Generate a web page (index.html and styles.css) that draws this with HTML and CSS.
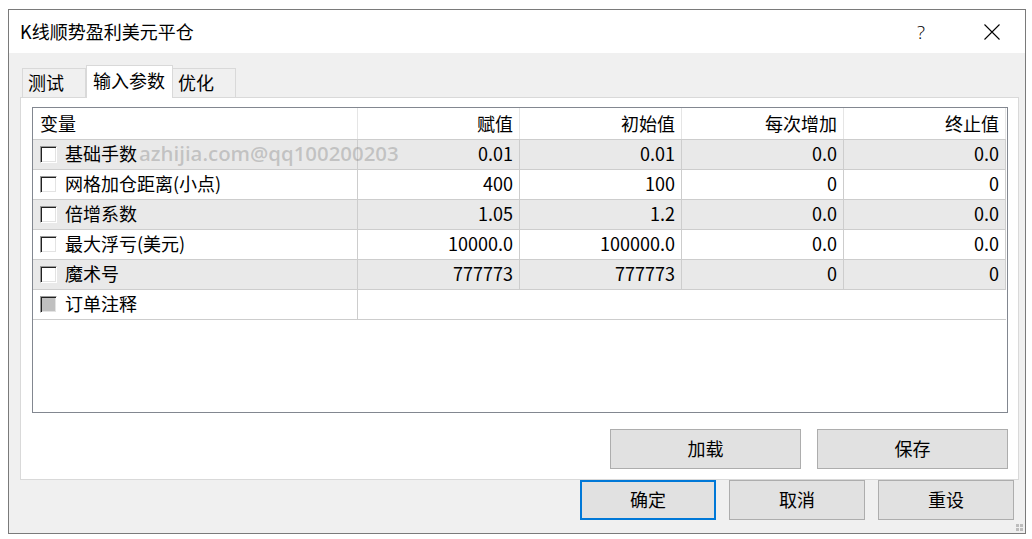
FILE: index.html
```html
<!DOCTYPE html>
<html lang="zh-CN">
<head>
    <meta charset="UTF-8">
    <title>K线顺势盈利美元平仓</title>
    <link rel="stylesheet" href="styles.css">
</head>
<body>
    <div class="window">
        <div class="titlebar">
            <span class="title">K线顺势盈利美元平仓</span>
            <span class="help">?</span>
            <svg class="close" width="16" height="16" viewBox="0 0 16 16">
                <path d="M0.5 0.5 L15.5 15.5 M15.5 0.5 L0.5 15.5" stroke="#000" stroke-width="1.1" fill="none"/>
            </svg>
        </div>

        <div class="client">
            <div class="tabs">
                <div class="tab first">测试</div>
                <div class="tab active">输入参数</div>
                <div class="tab last">优化</div>
            </div>

            <div class="panel">
                <div class="listview">
                    <div class="row head">
                        <div class="cell name">变量</div>
                        <div class="cell">赋值</div>
                        <div class="cell">初始值</div>
                        <div class="cell">每次增加</div>
                        <div class="cell">终止值</div>
                    </div>
                    <div class="row alt">
                        <div class="cell name"><span class="check"></span>基础手数</div>
                        <div class="cell">0.01</div>
                        <div class="cell">0.01</div>
                        <div class="cell">0.0</div>
                        <div class="cell">0.0</div>
                    </div>
                    <div class="row">
                        <div class="cell name"><span class="check"></span>网格加仓距离(小点)</div>
                        <div class="cell">400</div>
                        <div class="cell">100</div>
                        <div class="cell">0</div>
                        <div class="cell">0</div>
                    </div>
                    <div class="row alt">
                        <div class="cell name"><span class="check"></span>倍增系数</div>
                        <div class="cell">1.05</div>
                        <div class="cell">1.2</div>
                        <div class="cell">0.0</div>
                        <div class="cell">0.0</div>
                    </div>
                    <div class="row">
                        <div class="cell name"><span class="check"></span>最大浮亏(美元)</div>
                        <div class="cell">10000.0</div>
                        <div class="cell">100000.0</div>
                        <div class="cell">0.0</div>
                        <div class="cell">0.0</div>
                    </div>
                    <div class="row alt">
                        <div class="cell name"><span class="check"></span>魔术号</div>
                        <div class="cell">777773</div>
                        <div class="cell">777773</div>
                        <div class="cell">0</div>
                        <div class="cell">0</div>
                    </div>
                    <div class="row">
                        <div class="cell name"><span class="check dim"></span>订单注释</div>
                    </div>
                    <div class="watermark">azhijia.com@qq100200203</div>
                </div>

                <div class="panel-buttons">
                    <button class="btn wide">加载</button>
                    <button class="btn wide">保存</button>
                </div>
            </div>

            <div class="footer">
                <button class="btn default">确定</button>
                <button class="btn">取消</button>
                <button class="btn">重设</button>
            </div>
        </div>

        <div class="grip">
            <span></span><span></span><span></span><span></span>
        </div>
    </div>
</body>
</html>
```

FILE: styles.css
```css
body {
    margin: 0;
    background: #fff;
    color: #000;
    font-family: "Noto Sans CJK SC", "Microsoft YaHei", sans-serif;
    font-size: 18px;
}

.window {
    position: relative;
    display: flex;
    flex-direction: column;
    width: 1016px;
    height: 523px;
    margin: 9px 0 0 8px;
    border: 1px solid #7a7a7a;
    background: #f0f0f0;
}

/* title bar */
.titlebar {
    display: flex;
    align-items: center;
    height: 43px;
    padding: 0 25px 0 11px;
    background: #fff;
}
.title {
    flex: 1;
    line-height: 24px;
    padding-bottom: 2px;
}
.help {
    font-family: "Open Sans", sans-serif;
    font-weight: 300;
    font-size: 19px;
    line-height: 24px;
}
.close {
    margin-left: 59px;
}

/* client area */
.client {
    flex: 1;
    display: flex;
    flex-direction: column;
    padding: 12px 6px 13px 11px;
}

.tabs {
    display: flex;
    align-items: flex-end;
    height: 32px;
    padding-left: 2px;
}
.tab {
    box-sizing: border-box;
    height: 29px;
    border: 1px solid #d9d9d9;
    border-bottom: none;
    line-height: 27px;
    white-space: nowrap;
}
.tab.first {
    width: 64px;
    padding-left: 5px;
}
.tab.active {
    position: relative;
    z-index: 1;
    width: 87px;
    height: 33px;
    margin-bottom: -1px;
    padding-left: 6px;
    line-height: 29px;
    background: #fff;
}
.tab.last {
    width: 63px;
    padding-left: 5px;
    border-left: none;
}

.panel {
    display: flex;
    flex-direction: column;
    box-sizing: border-box;
    height: 383px;
    padding: 9px 10px 10px 11px;
    border: 1px solid #d9d9d9;
    background: #fff;
}

/* list view */
.listview {
    position: relative;
    box-sizing: border-box;
    height: 306px;
    border: 1px solid #828790;
    overflow: hidden;
}
.row {
    display: grid;
    grid-template-columns: 325px repeat(4, 162px);
    box-sizing: border-box;
    width: 973px;
    height: 30px;
    border-bottom: 1px solid #cdcdcd;
}
.row.head {
    height: 32px;
}
.row.alt {
    background: #e9e9e9;
}
.cell {
    display: flex;
    align-items: center;
    justify-content: flex-end;
    padding: 0 6px 3px;
    border-right: 1px solid #cdcdcd;
    line-height: 22px;
    white-space: nowrap;
}
.cell.name {
    justify-content: flex-start;
    padding-left: 7px;
}
.head .cell {
    border-right-color: #e5e5e5;
    padding-bottom: 1px;
}

.check {
    flex: none;
    box-sizing: border-box;
    width: 17px;
    height: 17px;
    margin: 3px 8px 0 0;
    border: 1px solid;
    border-color: #9a9a9a #fff #fff #9a9a9a;
    box-shadow: inset 1px 1px 0 #222, inset -1px -1px 0 #e3e3e3;
    background: #fff;
}
.check.dim {
    background: #c0c0c0;
}

.watermark {
    position: absolute;
    left: 106px;
    top: 33px;
    font-family: "Open Sans", sans-serif;
    font-weight: 600;
    font-size: 20.4px;
    line-height: 24px;
    color: rgba(130, 130, 130, 0.38);
    pointer-events: none;
}

/* buttons */
.btn {
    box-sizing: border-box;
    width: 136px;
    height: 40px;
    padding: 0 0 2px;
    border: 1px solid #adadad;
    background: #e1e1e1;
    color: #000;
    font: inherit;
    line-height: 24px;
}
.btn.wide {
    width: 191px;
}
.btn.default {
    border: 2px solid #0078d7;
}

.panel-buttons {
    display: flex;
    justify-content: flex-end;
    gap: 16px;
    margin-top: 16px;
}

.footer {
    display: flex;
    justify-content: flex-end;
    gap: 13px;
    padding-right: 5px;
}

.grip {
    position: absolute;
    right: 2px;
    bottom: 2px;
    display: grid;
    grid-template-columns: 3px 3px;
    gap: 1px;
}
.grip span {
    width: 3px;
    height: 3px;
    background: #bdbdbd;
}
```
